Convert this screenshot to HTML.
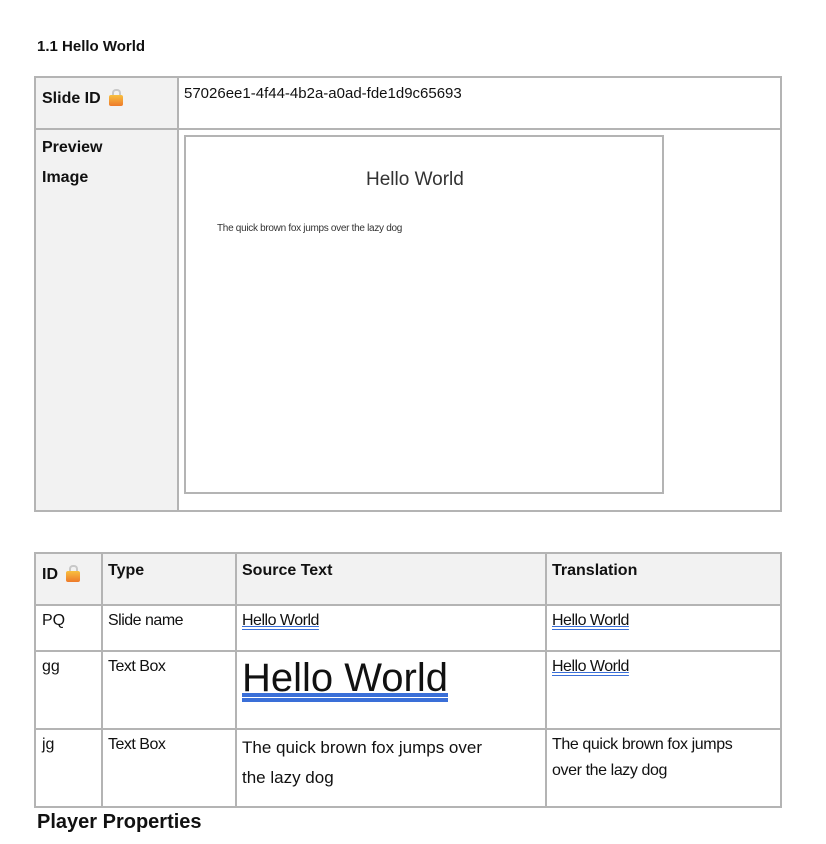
<!DOCTYPE html>
<html><head><meta charset="utf-8"><style>
body{margin:0;background:#fff;width:826px;height:844px;position:relative;font-family:"Liberation Sans",sans-serif;color:#111;overflow:hidden}
.a{position:absolute}
.c{position:absolute;box-sizing:border-box;border:2px solid #b4b4b4}
.h{background:#f2f2f2}
.b{font-weight:bold}
.lk{display:inline-block;width:14px;height:18px;position:relative;vertical-align:-3px;margin-left:8px}
.lk:after{content:"";position:absolute;left:0;top:7px;width:14px;height:11px;background:linear-gradient(#f8c040,#ee7a2a);border-radius:2px}
.lk:before{content:"";position:absolute;left:3px;top:1px;width:5px;height:7px;border:2px solid #c8c8c8;border-bottom:none;border-radius:4px 4px 0 0}
.u{text-decoration:underline double #3a6fd8}
</style></head><body>
<div class="a b" style="left:37px;top:38px;font-size:15px">1.1 Hello World</div>

<div class="c h" style="left:34px;top:76px;width:145px;height:54px"></div>
<div class="c" style="left:177px;top:76px;width:605px;height:54px"></div>
<div class="c h" style="left:34px;top:128px;width:145px;height:384px"></div>
<div class="c" style="left:177px;top:128px;width:605px;height:384px"></div>
<div class="a b" style="left:42px;top:88px;font-size:16px">Slide ID<span class="lk"></span></div>
<div class="a" style="left:184px;top:85px;font-size:15px">57026ee1-4f44-4b2a-a0ad-fde1d9c65693</div>
<div class="a b" style="left:42px;top:133px;font-size:16px;line-height:30px">Preview<br>Image</div>
<div class="a" style="left:184px;top:135px;width:480px;height:359px;box-sizing:border-box;border:2px solid #b4b4b4"></div>
<div class="a" style="left:366px;top:169px;font-size:19px;color:#333">Hello World</div>
<div class="a" style="left:217px;top:223px;font-size:10px;color:#333;letter-spacing:-0.3px">The quick brown fox jumps over the lazy dog</div>

<div class="c h" style="left:34px;top:552px;width:69px;height:54px"></div>
<div class="c h" style="left:101px;top:552px;width:136px;height:54px"></div>
<div class="c h" style="left:235px;top:552px;width:312px;height:54px"></div>
<div class="c h" style="left:545px;top:552px;width:237px;height:54px"></div>
<div class="c" style="left:34px;top:604px;width:69px;height:48px"></div>
<div class="c" style="left:101px;top:604px;width:136px;height:48px"></div>
<div class="c" style="left:235px;top:604px;width:312px;height:48px"></div>
<div class="c" style="left:545px;top:604px;width:237px;height:48px"></div>
<div class="c" style="left:34px;top:650px;width:69px;height:80px"></div>
<div class="c" style="left:101px;top:650px;width:136px;height:80px"></div>
<div class="c" style="left:235px;top:650px;width:312px;height:80px"></div>
<div class="c" style="left:545px;top:650px;width:237px;height:80px"></div>
<div class="c" style="left:34px;top:728px;width:69px;height:80px"></div>
<div class="c" style="left:101px;top:728px;width:136px;height:80px"></div>
<div class="c" style="left:235px;top:728px;width:312px;height:80px"></div>
<div class="c" style="left:545px;top:728px;width:237px;height:80px"></div>

<div class="a b" style="left:42px;top:564px;font-size:16px">ID<span class="lk"></span></div>
<div class="a b" style="left:108px;top:562px;font-size:16px">Type</div>
<div class="a b" style="left:242px;top:562px;font-size:16px">Source Text</div>
<div class="a b" style="left:552px;top:562px;font-size:16px">Translation</div>

<div class="a" style="left:42px;top:612px;font-size:16px">PQ</div>
<div class="a" style="left:108px;top:612px;font-size:16px;letter-spacing:-0.5px">Slide name</div>
<div class="a u" style="left:242px;top:612px;font-size:16px;letter-spacing:-0.5px">Hello World</div>
<div class="a u" style="left:552px;top:612px;font-size:16px;letter-spacing:-0.5px">Hello World</div>

<div class="a" style="left:42px;top:658px;font-size:16px">gg</div>
<div class="a" style="left:108px;top:658px;font-size:16px;letter-spacing:-0.5px">Text Box</div>
<div class="a u" style="left:242px;top:656px;font-size:40px">Hello World</div>
<div class="a u" style="left:552px;top:658px;font-size:16px;letter-spacing:-0.5px">Hello World</div>

<div class="a" style="left:42px;top:736px;font-size:16px;text-decoration:underline wavy red">jg</div>
<div class="a" style="left:108px;top:736px;font-size:16px;letter-spacing:-0.5px">Text Box</div>
<div class="a" style="left:242px;top:733px;font-size:17px;line-height:30px;width:290px">The quick brown fox jumps over<br>the lazy dog</div>
<div class="a" style="left:552px;top:732px;font-size:16px;line-height:26px;width:225px;letter-spacing:-0.4px">The quick brown fox jumps<br>over the lazy dog</div>

<div class="a b" style="left:37px;top:811px;font-size:20px">Player Properties</div>
</body></html>
